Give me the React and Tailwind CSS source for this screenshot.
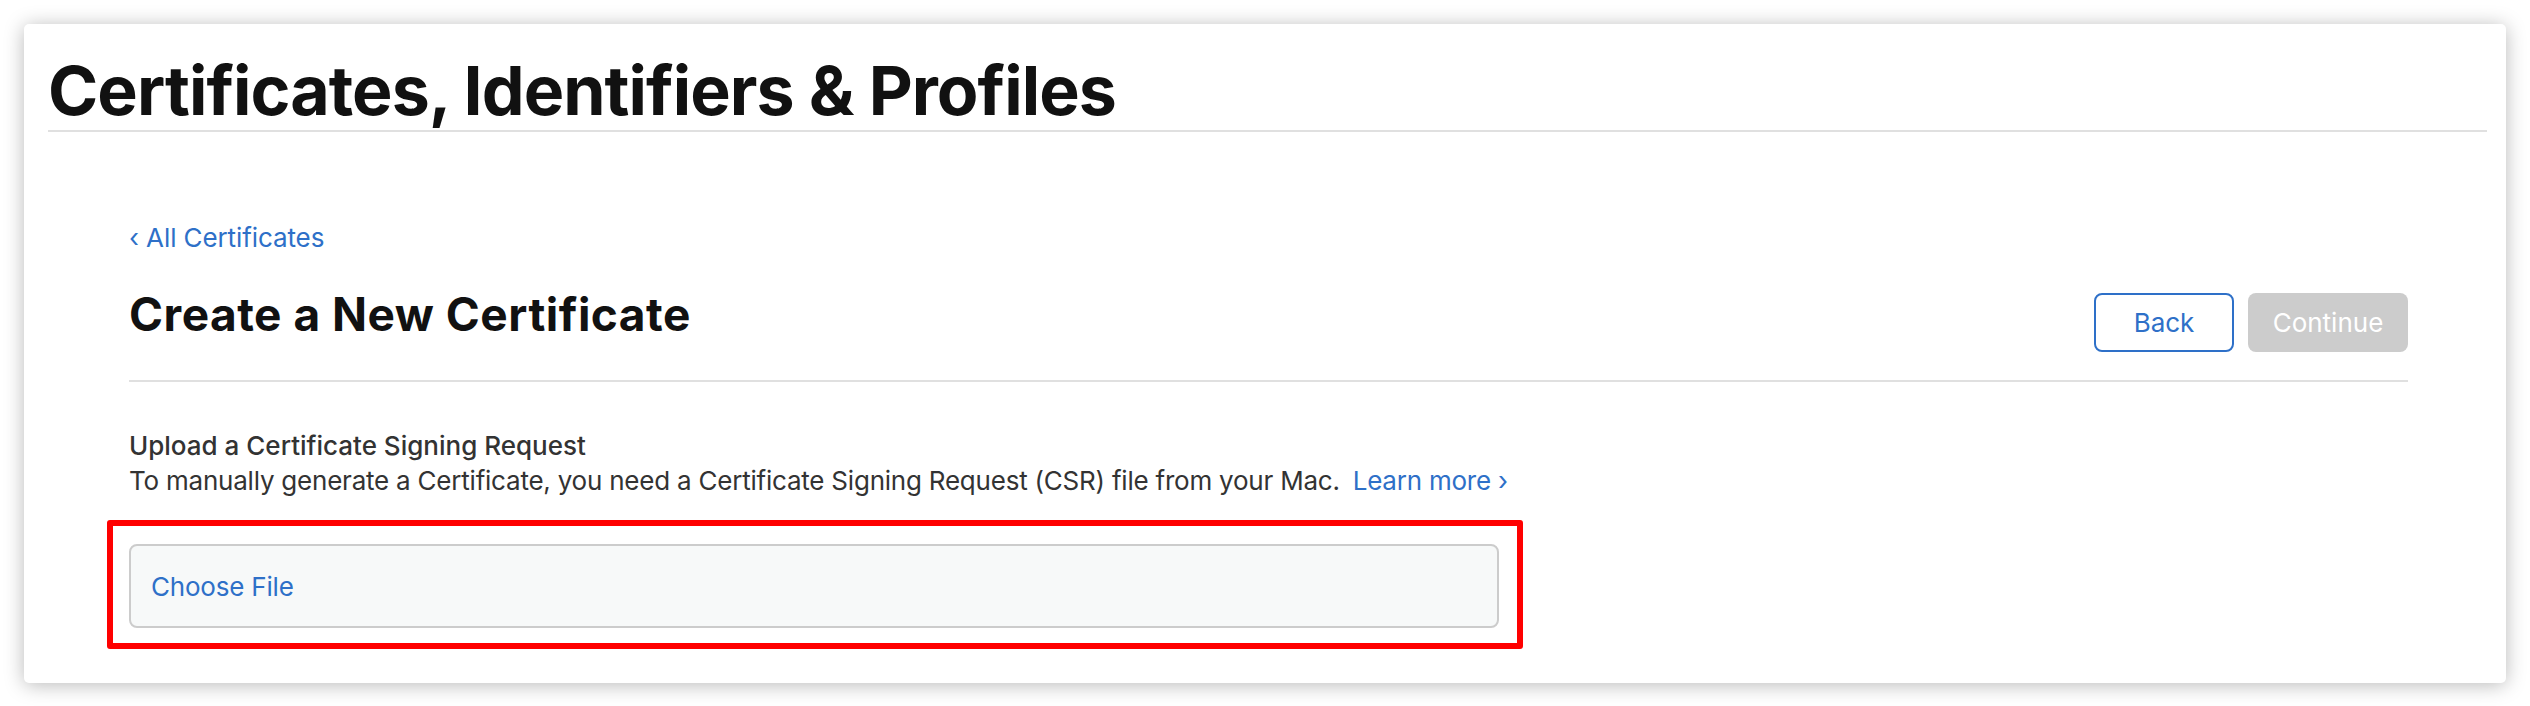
const App = () => {
  return (
    <div className="min-h-screen bg-white p-[24px] font-['Inter',sans-serif]">
      {/* Carte principale */}
      <div className="bg-white rounded-[5px] shadow-[0_2px_20px_rgba(0,0,0,0.28)] pl-[24px] pr-[19px] pt-[32px] pb-[34px]">
        <h1 className="text-[68px] leading-none font-bold text-[#111111] tracking-[-0.95px] pb-[6px] border-b-2 border-[#e0e0e0]">
          Certificates, Identifiers &amp; Profiles
        </h1>

        <div className="ml-[81px] mr-[79px]">
          {/* Lien retour */}
          <a href="#" className="block mt-[93px] text-[26px] leading-[26px] tracking-[-0.1px] text-[#2e70c8]">
            ‹ All Certificates
          </a>

          {/* En-tête */}
          <div className="mt-[40px] flex items-start justify-between pb-[28px] border-b-2 border-[#e0e0e0]">
            <h2 className="text-[46px] leading-none font-bold tracking-[0.5px] text-[#111111]">Create a New Certificate</h2>
            <div className="mt-[2px] flex gap-[14px]">
              <button className="w-[140px] h-[59px] border-2 border-[#2e70c8] rounded-[8px] text-[26px] text-[#2e70c8]">
                Back
              </button>
              <button className="w-[160px] h-[59px] bg-[#cccccc] rounded-[8px] text-[26px] text-white">
                Continue
              </button>
            </div>
          </div>

          {/* Upload */}
          <div className="mt-[46px] text-[26px] leading-[35px] text-[#333333]">
            <p className="font-medium">Upload a Certificate Signing Request</p>
            <p className="tracking-[-0.22px]">
              To manually generate a Certificate, you need a Certificate Signing Request (CSR) file from your Mac.
              <a href="#" className="ml-[13px] text-[#2e70c8]">Learn more ›</a>
            </p>
          </div>

          <div className="mt-[22px] -ml-[22px] w-[1416px] border-[6px] border-[#ff0000] rounded-[3px] pt-[18px] pb-[15px] pl-[16px] pr-[18px]">
            <div className="h-[84px] flex items-center pl-[20px] bg-[#f7f9f9] border-2 border-[#cccccc] rounded-[8px]">
              <span className="text-[26px] tracking-[-0.2px] text-[#2e70c8]">Choose File</span>
            </div>
          </div>
        </div>
      </div>
    </div>
  );
};

export default App;
